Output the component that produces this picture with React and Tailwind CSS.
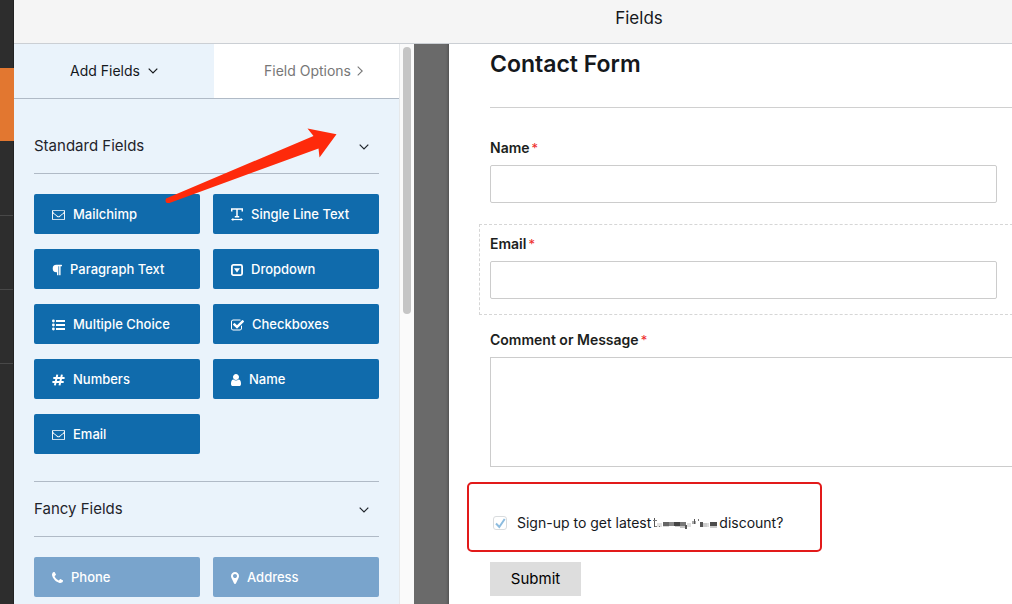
import React from "react";
import { FaParagraph } from "react-icons/fa";

const glyphs = {
  envelope:
    "M1664 1504v-768q-32 36-69 66-268 206-426 338-51 43-83 67t-86.5 48.5-102.5 24.5h-2q-48 0-102.5-24.5t-86.5-48.5-83-67q-158-132-426-338-37-30-69-66v768q0 13 9.5 22.5t22.5 9.5h1472q13 0 22.5-9.5t9.5-22.5zm0-1051v-24.5l-.5-13-3-12.5-5.5-9-9-7.5-14-2.5h-1472q-13 0-22.5 9.5t-9.5 22.5q0 168 147 284 193 152 401 317 6 5 35 29.5t46 37.500 44.5 31.5 50.5 27.5 43 9h2q20 0 43-9t50.5-27.5 44.5-31.5 46-37.500 35-29.5q208-165 401-317 54-43 100.5-115.5t46.5-131.5zm128-37v1088q0 66-47 113t-113 47h-1472q-66 0-113-47t-47-113v-1088q0-66 47-113t113-47h1472q66 0 113 47t47 113z",
  user: "M1536 1399q0 109-62.5 187t-150.5 78h-854q-88 0-150.5-78t-62.5-187q0-85 8.5-160.5t31.5-152 58.5-131 94-89 134.5-34.500q131 128 313 128t313-128q76 0 134.5 34.500t94 89 58.5 131 31.5 152 8.500 160.500zm-256-887q0 159-112.5 271.500t-271.5 112.500-271.5-112.500-112.500-271.500 112.500-271.500 271.500-112.500 271.500 112.500 112.500 271.500z",
  check:
    "M1472 930v318q0 119-84.5 203.5t-203.5 84.500h-832q-119 0-203.5-84.500t-84.500-203.500v-832q0-119 84.500-203.500t203.500-84.500h832q63 0 117 25 15 7 18 23 3 17-9 29l-49 49q-10 10-23 10-3 0-9-2-23-6-45-6h-832q-66 0-113 47t-47 113v832q0 66 47 113t113 47h832q66 0 113-47t47-113v-254q0-13 9-22l64-64q10-10 23-10 6 0 12 3 20 8 20 29zm231-489l-814 814q-24 24-57 24t-57-24l-430-430q-24-24-24-57t24-57l110-110q24-24 57-24t57 24l263 263 647-647q24-24 57-24t57 24l110 110q24 24 24 57t-24 57z",
  marker:
    "M1152 640q0-106-75-181t-181-75-181 75-75 181 75 181 181 75 181-75 75-181zm256 0q0 109-33 179l-364 774q-16 33-47.5 52t-67.500 19-67.500-19-46.500-52l-365-774q-33-70-33-179 0-212 150-362t362-150 362 150 150 362z",
  phone:
    "M1600 1240q0 27-10 70.500t-21 68.500q-21 50-122 106-94 51-186 51-27 0-52.500-3.500t-57.500-12.500-47.500-14.500-55.500-20.500-49-18q-98-35-175-83-128-79-264.500-215.500t-215.500-264.500q-48-77-83-175-3-9-18-49t-20.500-55.500-14.500-47.500-12.500-57.500-3.500-52.500q0-92 51-186 56-101 106-122 25-11 68.500-21t70.500-10q14 0 21 3 18 6 53 76 11 19 30 54t35 63.500 31 53.500q3 4 17.500 25t21.500 35.500 7 28.500q0 20-28.500 50t-62 55-62 53-28.500 46q0 9 5 22.500t8.500 20.500 14 24 11.500 19q76 137 174 235t235 174q2 1 19 11.500t24 14 20.500 8.500 22.500 5q18 0 46-28.500t53-62 55-62 50-28.500q14 0 28.500 7t35.500 21.500 25 17.500q25 15 53.500 31t63.500 35 54 30q70 35 76 53 3 7 3 21z",
};

function Glyph({ name, box, className }) {
  return (
    <svg viewBox={box} className={className} fill="currentColor" aria-hidden="true">
      <path d={glyphs[name]} />
    </svg>
  );
}

const Envelope = () => <Glyph name="envelope" box="0 128 1792 1664" className="h-3 w-[13px]" />;
const User = () => <Glyph name="user" box="256 128 1280 1536" className="h-3 w-[10px]" />;
const Check = () => <Glyph name="check" box="64 64 1664 1536" className="h-3 w-[13px]" />;
const Marker = () => <Glyph name="marker" box="384 128 1024 1536" className="h-3 w-2" />;
const Phone = () => <Glyph name="phone" box="192 128 1408 1408" className="h-[11px] w-[11px]" />;
const Paragraph = () => <FaParagraph className="h-3 w-[10px]" preserveAspectRatio="none" aria-hidden="true" />;

const TextLine = () => (
  <svg viewBox="0 0 12 13" className="h-[13px] w-3" fill="none" stroke="currentColor" aria-hidden="true">
    <path d="M.7 3.400V1h10.600v2.400M6 1v7.800M3.800 8.700h4.400" strokeWidth="1.500" />
    <path d="M1.500 11.500h9" strokeWidth="1.200" />
    <path d="M0 11.500 2.300 9.900v3.100zM12 11.500 9.700 9.900v3.100z" fill="currentColor" stroke="none" />
  </svg>
);
const Dropdown = () => (
  <svg viewBox="0 0 12 12" className="h-3 w-3" aria-hidden="true">
    <rect x=".9" y=".9" width="10.200" height="10.200" rx="1.500" fill="none" stroke="currentColor" strokeWidth="1.800" />
    <path d="M3 4.200h6L6 8.400z" fill="currentColor" />
  </svg>
);
const List = () => (
  <svg viewBox="0 0 13 12" className="h-3 w-[13px]" fill="currentColor" aria-hidden="true">
    <circle cx="1.400" cy="2" r="1.400" />
    <circle cx="1.400" cy="6" r="1.400" />
    <circle cx="1.400" cy="10" r="1.400" />
    <path d="M4 1h9v2H4zM4 5h9v2H4zM4 9h9v2H4z" />
  </svg>
);
const Hash = () => (
  <svg viewBox="0 0 13 12" className="h-3 w-[13px]" fill="none" stroke="currentColor" strokeWidth="2" aria-hidden="true">
    <path d="M5.300.600 2.900 11.400M9.900.600 7.500 11.400M1.300 4h11.300M.4 8h11.300" />
  </svg>
);

function Chevron({ right }) {
  return right ? (
    <svg viewBox="0 0 6 10" className="h-[10px] w-[6px]" fill="none" stroke="currentColor" strokeWidth="1.100" aria-hidden="true">
      <path d="M.7.700 5.200 5 .7 9.300" />
    </svg>
  ) : (
    <svg viewBox="0 0 10 6" className="h-[6px] w-[10px]" fill="none" stroke="currentColor" strokeWidth="1.200" aria-hidden="true">
      <path d="M.7.700 5 5 9.300.700" />
    </svg>
  );
}

const standardFields = [
  ["Mailchimp", Envelope],
  ["Single Line Text", TextLine],
  ["Paragraph Text", Paragraph],
  ["Dropdown", Dropdown],
  ["Multiple Choice", List],
  ["Checkboxes", Check],
  ["Numbers", Hash],
  ["Name", User],
  ["Email", Envelope],
];
const fancyFields = [
  ["Phone", Phone],
  ["Address", Marker],
];

function FieldGroup({ title, fields, muted }) {
  return (
    <section>
      <h2 className="border-b border-[#b0bac6]">
        <button type="button" className="flex h-[54px] w-full items-center justify-between pt-px pr-[10px] text-[15px] text-[#1f242b]">
          {title}
          <Chevron />
        </button>
      </h2>
      <div className="grid grid-cols-2 gap-x-[13px] gap-y-[15px] pt-5">
        {fields.map(([label, Icon]) => (
          <button
            key={label}
            type="button"
            className={
              "flex h-10 items-center gap-2 rounded-[2px] pt-px pl-[18px] text-[13px] font-medium text-white " +
              (muted ? "bg-[#79a4cc]" : "bg-[#106bac]")
            }
          >
            <Icon />
            {label}
          </button>
        ))}
      </div>
    </section>
  );
}

function FormLabel({ htmlFor, children }) {
  return (
    <label htmlFor={htmlFor} className="block h-5 text-sm leading-5 font-semibold text-[#1c1e20]">
      {children}
      <span className="ml-[2px] text-[13px] font-normal text-[#ee2a2a]">*</span>
    </label>
  );
}

/* Pixelated word: [x, y, width, height, shade] */
const mosaic = [
  [1, 3, 1, 9, "#555"], [0, 5, 4, 1, "#777"], [2, 11, 2, 1, "#777"], [4, 8, 5, 4, "#e2e2e2"],
  [6, 11, 1, 1, "#777"], [10, 7, 6, 4, "#666"], [10, 11, 6, 1, "#d8d8d8"], [16, 7, 5, 4, "#888"],
  [21, 7, 6, 4, "#444"], [22, 11, 5, 1, "#ccc"], [27, 7, 6, 4, "#777"], [27, 11, 6, 2, "#c4c4c4"],
  [32, 10, 2, 4, "#555"], [34, 8, 4, 4, "#e0e0e0"], [39, 6, 4, 3, "#aaa"], [41, 4, 1, 5, "#555"],
  [45, 4, 1, 2, "#777"], [47, 7, 3, 5, "#555"], [50, 8, 4, 4, "#ccc"],
  [54, 8, 2, 4, "#ddd"], [57, 7, 7, 4, "#4c4c4c"], [57, 11, 7, 2, "#ccc"],
];

export default function App() {
  return (
    <div className="flex h-screen overflow-hidden bg-white font-['Inter','Liberation_Sans',sans-serif] text-[#15181c]">
      <nav aria-label="Builder" className="flex w-[14px] shrink-0 flex-col border-r border-[#222] bg-[#2d2d2d] pt-[68px]">
        <a href="#fields" aria-label="Fields" className="-mr-px block h-[73px] bg-[#e27730]" />
        <a href="#settings" aria-label="Settings" className="block h-[75px] border-b border-[#484848]" />
        <a href="#marketing" aria-label="Marketing" className="block h-[74px] border-b border-[#484848]" />
        <a href="#payments" aria-label="Payments" className="block h-[74px] border-b border-[#484848]" />
      </nav>

      <div className="flex min-w-0 flex-1 flex-col">
        <header className="flex h-11 shrink-0 justify-center border-b border-[#cbcfd4] bg-[#f5f5f5] pt-[6px] pl-[252px]">
          <h1 className="text-[17px] leading-6">Fields</h1>
        </header>

        <div className="flex min-h-0 flex-1">
          <aside className="relative flex w-[400px] shrink-0 bg-[#fafafa]">
            <div className="flex w-[385px] flex-col overflow-hidden bg-[#eaf3fb]">
              <div className="flex h-[55px] shrink-0 border-b border-[#b0bac6] text-sm">
                <button type="button" className="flex w-[200px] items-center justify-center gap-2">
                  Add Fields
                  <Chevron />
                </button>
                <button type="button" className="flex flex-1 items-center justify-center gap-[6px] bg-white pl-[14px] text-[#777]">
                  Field Options
                  <Chevron right />
                </button>
              </div>
              <div className="px-5 pt-5">
                <FieldGroup title="Standard Fields" fields={standardFields} />
                <div className="mt-[27px] border-t border-[#b0bac6]">
                  <FieldGroup title="Fancy Fields" fields={fancyFields} muted />
                </div>
              </div>
            </div>
            <div className="flex-1 border-l border-[#e6e8ea] px-[3px] pt-[3px]">
              <div className="h-[267px] w-2 rounded-full bg-[#c5c5c5]" />
            </div>
            <svg viewBox="0 0 176 80" className="pointer-events-none absolute top-[82px] left-[148px] h-20 w-44" aria-hidden="true">
              <path d="M4 72.500 151.500 10 145.500 2.500 174.500 8.300 157.500 31.500 156.500 22.500 7.500 77Q3.500 77.500 3.500 74.500Z" fill="#fe2a0b" />
            </svg>
          </aside>

          <div className="w-[35px] shrink-0 bg-[#6a6a6a] shadow-[inset_-3px_0_3px_-2px_#505050]" />

          <main className="min-w-0 flex-1 overflow-hidden">
            <form className="-mr-4 pl-[41px]" onSubmit={(e) => e.preventDefault()}>
              <h2 className="h-16 border-b border-[#d0d0d0] pt-1 text-[23px] leading-8 font-semibold">Contact Form</h2>

              <div className="pt-[30px] pr-[31px]">
                <FormLabel htmlFor="name">Name</FormLabel>
                <input id="name" type="text" className="mt-[7px] block h-[38px] w-full rounded-[2px] border border-[#ccc] bg-white px-2" />
              </div>

              <div className="mt-[21px] -ml-[11px] h-[91px] border border-dashed border-[#d6d6d6] pt-[9px] pr-[30px] pl-[10px]">
                <FormLabel htmlFor="email">Email</FormLabel>
                <input id="email" type="email" className="mt-[7px] block h-[38px] w-full rounded-[2px] border border-[#ccc] bg-white px-2" />
              </div>

              <div className="pt-[15px]">
                <FormLabel htmlFor="message">Comment or Message</FormLabel>
                <textarea id="message" className="mt-[7px] block h-[110px] w-full resize-none border border-[#ccc] bg-white p-2" />
              </div>

              <div className="mt-[15px] -ml-[23px] flex h-[70px] w-[355px] items-center rounded-[5px] border-2 border-[#e21a1a] pt-3 pl-6">
                <span className="relative block h-[14px] w-[14px]">
                  <input
                    id="signup"
                    type="checkbox"
                    defaultChecked
                    className="block h-[14px] w-[14px] appearance-none rounded-[3px] border border-[#d9dcde] bg-white"
                  />
                  <svg viewBox="0 0 14 14" className="pointer-events-none absolute inset-0 h-[14px] w-[14px]" aria-hidden="true">
                    <path d="M3 7.500 6.300 11 11.700 3" fill="none" stroke="#8dbcdf" strokeWidth="2" />
                  </svg>
                </span>
                <label htmlFor="signup" className="flex items-center pl-[10px] text-sm whitespace-nowrap">
                  Sign-up to get latest
                  <svg viewBox="0 0 64 16" className="mx-[2px] h-4 w-16" role="img" aria-label="hidden word">
                    {mosaic.map(([x, y, w, h, c], i) => (
                      <rect key={i} x={x} y={y} width={w} height={h} fill={c} />
                    ))}
                  </svg>
                  discount?
                </label>
              </div>

              <button type="submit" className="mt-[10px] block h-[34px] w-[91px] bg-[#ddd] text-[15px] text-black">
                Submit
              </button>
            </form>
          </main>
        </div>
      </div>
    </div>
  );
}
